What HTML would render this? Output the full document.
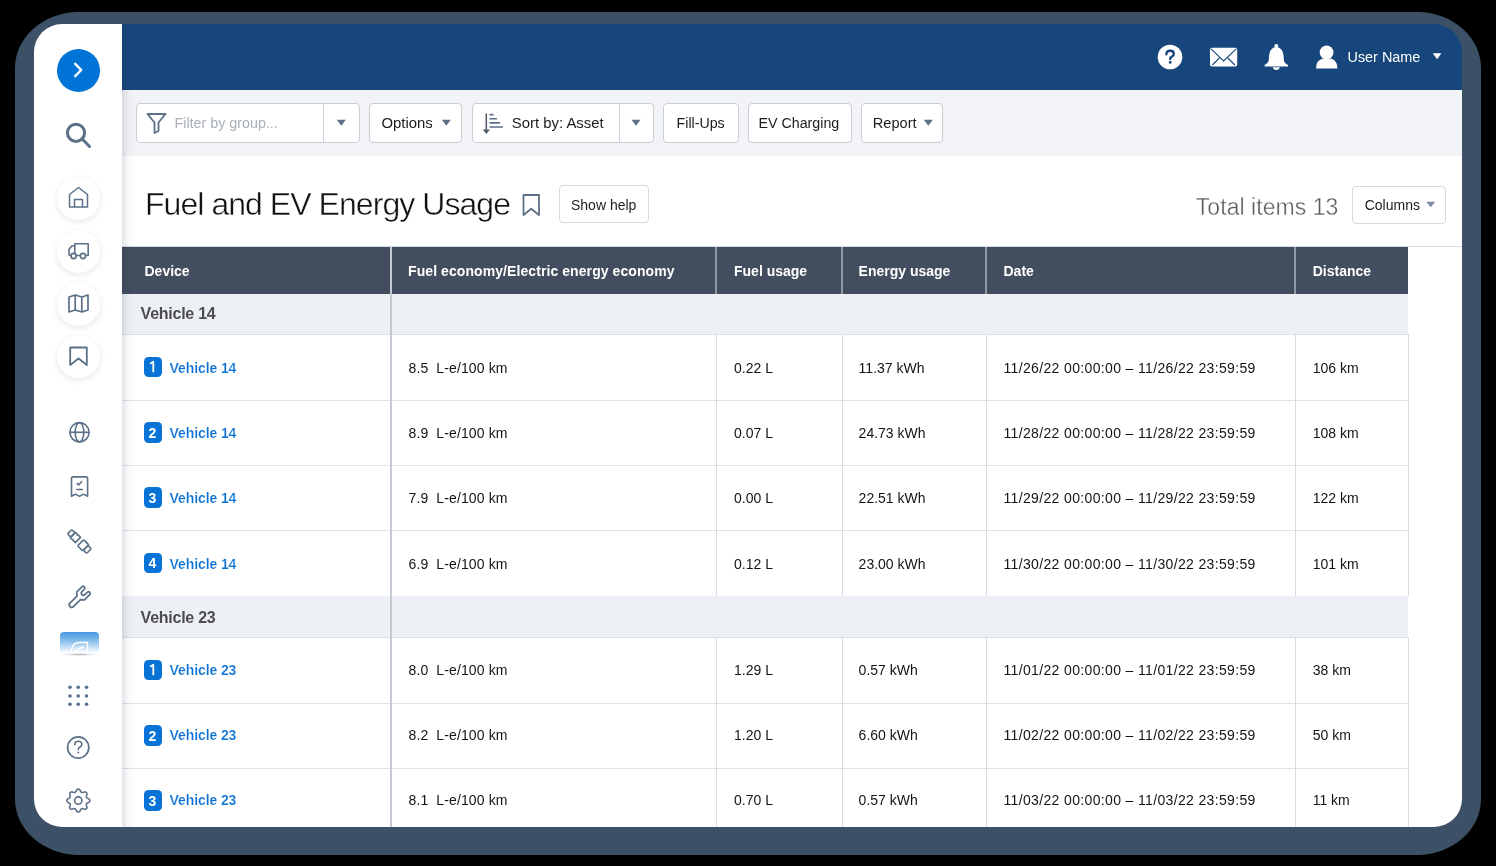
<!DOCTYPE html>
<html><head><meta charset="utf-8">
<style>
*{box-sizing:border-box;margin:0;padding:0}
html,body{width:1496px;height:866px;overflow:hidden;background:#000;font-family:"Liberation Sans",sans-serif}
.abs{position:absolute}
#frame{position:absolute;left:15px;top:12px;width:1466px;height:843px;background:#3d5166;border-radius:64px / 56px}
#screen{position:absolute;left:0;top:0;width:1496px;height:866px;will-change:transform;clip-path:inset(24px 34px 39px 34px round 28px);background:#fff}
#side{position:absolute;left:34px;top:24px;width:88px;height:803px;background:#fff}
#hdr{position:absolute;left:122px;top:24px;width:1340px;height:66px;background:#17467c}
#tb{position:absolute;left:122px;top:90px;width:1340px;height:66px;background:#f2f3f7}
#shadow{position:absolute;left:122px;top:90px;width:12px;height:737px;background:linear-gradient(90deg,rgba(40,50,70,.10),rgba(40,50,70,0))}
.btn{position:absolute;top:103px;height:40px;background:#fff;border:1px solid #c9ced6;border-radius:4px;font-size:14.7px;color:#1c1c1c;line-height:38px;white-space:nowrap}
.tri{position:absolute;width:0;height:0;border-left:4.5px solid transparent;border-right:4.5px solid transparent;border-top:6px solid #5d6f85}
.circ{position:absolute;width:43px;height:43px;border-radius:50%;background:#fff;box-shadow:0 2px 6px rgba(40,50,80,.12)}
svg{position:absolute;overflow:visible}
.t{position:absolute;white-space:pre;font-size:14px;color:#1f1f1f;line-height:16px}
.th{position:absolute;white-space:pre;font-size:14px;font-weight:bold;color:#fff;line-height:16px}
.vl{position:absolute;width:1px;background:#d8dbe1}
.hl{position:absolute;height:1px;background:#dfe2e7}
.badge{position:absolute;width:18px;height:20px;background:#0b74d4;border-radius:3px;color:#fff;font-size:13px;text-align:center;line-height:20px}
.lnk{position:absolute;white-space:pre;font-size:14px;font-weight:bold;color:#1a74cb;line-height:16px}
.grp{position:absolute;white-space:pre;font-size:15.5px;font-weight:bold;color:#505050;line-height:18px}
</style></head>
<body>
<div id="frame"></div>
<div id="screen">
<div id="side"></div><div id="hdr"></div><div id="tb"></div>
<div class="abs" style="left:57px;top:49px;width:43px;height:43px;border-radius:50%;background:#0074d6"></div>
<svg style="left:0;top:0" width="1" height="1"><path d="M75.2 63.8 L81.2 70 L75.2 76.2" fill="none" stroke="#fff" stroke-width="2.4" stroke-linecap="round" stroke-linejoin="round"/></svg>
<svg style="left:0;top:0" width="1" height="1"><circle cx="76" cy="132.8" r="8.6" fill="none" stroke="#5b7087" stroke-width="3"/><path d="M82.5 139.3 L89.5 146.5" stroke="#5b7087" stroke-width="3" stroke-linecap="round"/></svg>
<div class="circ" style="left:57px;top:176.5px"></div>
<div class="circ" style="left:57px;top:229.5px"></div>
<div class="circ" style="left:57px;top:282.5px"></div>
<div class="circ" style="left:57px;top:334.5px"></div>
<svg style="left:0;top:0" width="1" height="1"><path d="M69.5 207 V194.5 L78.5 187.5 L87.5 194.5 V207 Z M74.5 207 V199.5 H82.5 V207" fill="none" stroke="#5b7087" stroke-width="1.5" stroke-linejoin="round"/></svg>
<svg style="left:0;top:0" width="1" height="1"><path d="M71.3 255.5 H70 Q69 255.5 69 254.5 V249.5 L71.7 246 H74.8 M74.8 255.5 V243.8 H88.2 V255.5 H86 M80 255.5 H76.6" fill="none" stroke="#5b7087" stroke-width="1.6" stroke-linejoin="round"/><circle cx="73.6" cy="256" r="2.6" fill="#fff" stroke="#5b7087" stroke-width="1.6"/><circle cx="83" cy="256" r="2.6" fill="#fff" stroke="#5b7087" stroke-width="1.6"/></svg>
<svg style="left:0;top:0" width="1" height="1"><path d="M69 297 L75.2 295 L81.8 297 L88 295 V310 L81.8 312 L75.2 310 L69 312 Z M75.2 295 V310 M81.8 297 V312" fill="none" stroke="#5b7087" stroke-width="1.7" stroke-linejoin="round"/></svg>
<svg style="left:0;top:0" width="1" height="1"><path d="M70.2 347.5 H86.8 V365 L78.5 358.5 L70.2 365 Z" fill="none" stroke="#5b7087" stroke-width="1.8" stroke-linejoin="round"/></svg>
<svg style="left:0;top:0" width="1" height="1"><circle cx="79.5" cy="432.3" r="9.6" fill="none" stroke="#5b7087" stroke-width="1.7"/><ellipse cx="79.5" cy="432.3" rx="4.3" ry="9.6" fill="none" stroke="#5b7087" stroke-width="1.6"/><path d="M70 432.3 H89" stroke="#5b7087" stroke-width="1.6"/></svg>
<svg style="left:0;top:0" width="1" height="1"><path d="M71.5 496.3 V478.6 Q71.5 476.9 73.2 476.9 H85.9 Q87.6 476.9 87.6 478.6 V496.3 L83.5 494.1 L79.5 496.4 L75.5 494.1 Z" fill="none" stroke="#5b7087" stroke-width="1.6" stroke-linejoin="round"/><path d="M77.3 483.6 L78.6 485 L81.6 481.7 M76.9 489.5 H82.4" fill="none" stroke="#5b7087" stroke-width="1.6" stroke-linecap="round" stroke-linejoin="round"/></svg>
<svg style="left:0;top:0" width="1" height="1"><g transform="rotate(-45 79.5 541.6)" fill="none" stroke="#5b7087" stroke-width="1.6" stroke-linejoin="round"><rect x="76.5" y="527.6" width="6" height="4.6" rx="1.3"/><path d="M75.8 532.2 H83.2 V534.5 Q82.2 535.3 83.2 536.2 V539.4 H75.8 V536.2 Q76.8 535.3 75.8 534.5 Z"/><rect x="75.2" y="543.2" width="8.6" height="7.2" rx="1"/><rect x="76.2" y="550.4" width="6.6" height="4.6" rx="1.3"/></g></svg>
<svg style="left:0;top:0" width="1" height="1"><g transform="translate(78.7 597.9) rotate(45) scale(1.07)"><path d="M-2.3 0 V9.3 Q-2.3 11.4 0 11.4 Q2.3 11.4 2.3 9.3 V0 L5.2 -2.6 V-9.4 Q5.2 -11 3.6 -11 Q2 -11 2 -9.4 V-6.2 Q2 -4.3 0 -4.3 Q-2 -4.3 -2 -6.2 V-9.4 Q-2 -11 -3.6 -11 Q-5.2 -11 -5.2 -9.4 V-2.6 Z" fill="none" stroke="#5b7087" stroke-width="1.6" stroke-linejoin="round"/></g></svg>
<div class="abs" style="left:60px;top:632px;width:39px;height:21px;border-radius:4px 4px 0 0;background:linear-gradient(180deg,#4797df 0%,#8cc0ec 45%,#ffffff 100%)"></div>
<div class="abs" style="left:61px;top:653px;width:37px;height:3px;border-radius:50%;background:radial-gradient(ellipse at center,rgba(120,125,140,.55),rgba(120,125,140,0) 70%)"></div>
<svg style="left:0;top:0" width="1" height="1"><path d="M71.5 653 Q71 642.5 80 642.5 L87.5 642.5 V653 M74.5 652 Q77.5 648.5 83 647" fill="none" stroke="#fff" stroke-width="1.4" stroke-linecap="round"/></svg>
<svg style="left:0;top:0" width="1" height="1"><circle cx="70" cy="687.3" r="1.8" fill="#5b7087"/><circle cx="78.2" cy="687.3" r="1.8" fill="#5b7087"/><circle cx="86.5" cy="687.3" r="1.8" fill="#5b7087"/><circle cx="70" cy="696" r="1.8" fill="#5b7087"/><circle cx="78.2" cy="696" r="1.8" fill="#5b7087"/><circle cx="86.5" cy="696" r="1.8" fill="#5b7087"/><circle cx="70" cy="704.3" r="1.8" fill="#5b7087"/><circle cx="78.2" cy="704.3" r="1.8" fill="#5b7087"/><circle cx="86.5" cy="704.3" r="1.8" fill="#5b7087"/></svg>
<svg style="left:0;top:0" width="1" height="1"><circle cx="78.2" cy="747.5" r="10.6" fill="none" stroke="#5b7087" stroke-width="1.7"/><path d="M74.8 744.8 Q74.8 741.2 78.3 741.2 Q81.8 741.2 81.8 744.4 Q81.8 746.3 79.5 747.2 Q78.3 747.8 78.3 749.6" fill="none" stroke="#5b7087" stroke-width="1.6" stroke-linecap="round"/><circle cx="78.3" cy="752.6" r="1" fill="#5b7087"/></svg>
<svg style="left:0;top:0" width="1" height="1"><path d="M89.75 800.60 L89.73 800.90 L89.66 801.20 L89.54 801.48 L89.37 801.76 L89.12 802.02 L88.81 802.26 L88.45 802.48 L88.06 802.67 L87.69 802.85 L87.36 803.03 L87.09 803.21 L86.88 803.39 L86.71 803.58 L86.58 803.78 L86.48 803.99 L86.40 804.21 L86.35 804.44 L86.34 804.70 L86.36 804.98 L86.43 805.29 L86.53 805.65 L86.67 806.04 L86.81 806.45 L86.91 806.86 L86.96 807.25 L86.95 807.60 L86.88 807.92 L86.76 808.21 L86.59 808.47 L86.40 808.70 L86.17 808.89 L85.91 809.06 L85.62 809.18 L85.30 809.25 L84.95 809.26 L84.56 809.21 L84.15 809.11 L83.74 808.97 L83.35 808.83 L82.99 808.73 L82.68 808.66 L82.40 808.64 L82.14 808.65 L81.91 808.70 L81.69 808.78 L81.48 808.88 L81.28 809.01 L81.09 809.18 L80.91 809.39 L80.73 809.66 L80.55 809.99 L80.37 810.36 L80.18 810.75 L79.96 811.11 L79.72 811.42 L79.46 811.67 L79.18 811.84 L78.90 811.96 L78.60 812.03 L78.30 812.05 L78.00 812.03 L77.70 811.96 L77.42 811.84 L77.14 811.67 L76.88 811.42 L76.64 811.11 L76.42 810.75 L76.23 810.36 L76.05 809.99 L75.87 809.66 L75.69 809.39 L75.51 809.18 L75.32 809.01 L75.12 808.88 L74.91 808.78 L74.69 808.70 L74.46 808.65 L74.20 808.64 L73.92 808.66 L73.61 808.73 L73.25 808.83 L72.86 808.97 L72.45 809.11 L72.04 809.21 L71.65 809.26 L71.30 809.25 L70.98 809.18 L70.69 809.06 L70.43 808.89 L70.20 808.70 L70.01 808.47 L69.84 808.21 L69.72 807.92 L69.65 807.60 L69.64 807.25 L69.69 806.86 L69.79 806.45 L69.93 806.04 L70.07 805.65 L70.17 805.29 L70.24 804.98 L70.26 804.70 L70.25 804.44 L70.20 804.21 L70.12 803.99 L70.02 803.78 L69.89 803.58 L69.72 803.39 L69.51 803.21 L69.24 803.03 L68.91 802.85 L68.54 802.67 L68.15 802.48 L67.79 802.26 L67.48 802.02 L67.23 801.76 L67.06 801.48 L66.94 801.20 L66.87 800.90 L66.85 800.60 L66.87 800.30 L66.94 800.00 L67.06 799.72 L67.23 799.44 L67.48 799.18 L67.79 798.94 L68.15 798.72 L68.54 798.53 L68.91 798.35 L69.24 798.17 L69.51 797.99 L69.72 797.81 L69.89 797.62 L70.02 797.42 L70.12 797.21 L70.20 796.99 L70.25 796.76 L70.26 796.50 L70.24 796.22 L70.17 795.91 L70.07 795.55 L69.93 795.16 L69.79 794.75 L69.69 794.34 L69.64 793.95 L69.65 793.60 L69.72 793.28 L69.84 792.99 L70.01 792.73 L70.20 792.50 L70.43 792.31 L70.69 792.14 L70.98 792.02 L71.30 791.95 L71.65 791.94 L72.04 791.99 L72.45 792.09 L72.86 792.23 L73.25 792.37 L73.61 792.47 L73.92 792.54 L74.20 792.56 L74.46 792.55 L74.69 792.50 L74.91 792.42 L75.12 792.32 L75.32 792.19 L75.51 792.02 L75.69 791.81 L75.87 791.54 L76.05 791.21 L76.23 790.84 L76.42 790.45 L76.64 790.09 L76.88 789.78 L77.14 789.53 L77.42 789.36 L77.70 789.24 L78.00 789.17 L78.30 789.15 L78.60 789.17 L78.90 789.24 L79.18 789.36 L79.46 789.53 L79.72 789.78 L79.96 790.09 L80.18 790.45 L80.37 790.84 L80.55 791.21 L80.73 791.54 L80.91 791.81 L81.09 792.02 L81.28 792.19 L81.48 792.32 L81.69 792.42 L81.91 792.50 L82.14 792.55 L82.40 792.56 L82.68 792.54 L82.99 792.47 L83.35 792.37 L83.74 792.23 L84.15 792.09 L84.56 791.99 L84.95 791.94 L85.30 791.95 L85.62 792.02 L85.91 792.14 L86.17 792.31 L86.40 792.50 L86.59 792.73 L86.76 792.99 L86.88 793.28 L86.95 793.60 L86.96 793.95 L86.91 794.34 L86.81 794.75 L86.67 795.16 L86.53 795.55 L86.43 795.91 L86.36 796.22 L86.34 796.50 L86.35 796.76 L86.40 796.99 L86.48 797.21 L86.58 797.42 L86.71 797.62 L86.88 797.81 L87.09 797.99 L87.36 798.17 L87.69 798.35 L88.06 798.53 L88.45 798.72 L88.81 798.94 L89.12 799.18 L89.37 799.44 L89.54 799.72 L89.66 800.00 L89.73 800.30 Z" fill="none" stroke="#5b7087" stroke-width="1.6" stroke-linejoin="round"/><circle cx="78.3" cy="800.6" r="3.7" fill="none" stroke="#5b7087" stroke-width="1.6"/></svg>
<svg style="left:0;top:0" width="1" height="1"><circle cx="1170" cy="57" r="12.3" fill="#fff"/><path d="M1166.4 54.3 Q1166.4 50.8 1170.2 50.8 Q1173.8 50.8 1173.8 54 Q1173.8 55.8 1171.6 56.8 Q1170.2 57.5 1170.2 59" fill="none" stroke="#17467c" stroke-width="2.4" stroke-linecap="round" stroke-linejoin="round"/><circle cx="1170.2" cy="62.4" r="1.4" fill="#17467c"/></svg>
<svg style="left:0;top:0" width="1" height="1"><rect x="1210" y="47.8" width="27.2" height="18.6" rx="2" fill="#fff"/><path d="M1211 48.8 L1223.6 61 L1236.2 48.8 M1212.3 65 L1219.4 58 M1234.9 65 L1227.8 58" fill="none" stroke="#17467c" stroke-width="1.1"/></svg>
<svg style="left:0;top:0" width="1" height="1"><circle cx="1276.3" cy="46" r="2" fill="#fff"/><path d="M1276.3 47 Q1283.2 47.8 1283.6 56 L1283.9 60.5 Q1284.3 63.2 1288 65 V66.5 H1264.6 V65 Q1268.3 63.2 1268.7 60.5 L1269 56 Q1269.4 47.8 1276.3 47 Z" fill="#fff"/><path d="M1272.8 67.3 Q1273.3 70 1276.3 70 Q1279.3 70 1279.8 67.3 Z" fill="#fff"/></svg>
<svg style="left:0;top:0" width="1" height="1"><circle cx="1326.6" cy="52.3" r="6.9" fill="#fff"/><path d="M1316 68.6 Q1316 58.2 1326.6 58 Q1337.4 58.2 1337.4 68.6 Z" fill="#fff"/></svg>
<div class="abs" style="left:1347.5px;top:47.51px;font-size:14.4px;line-height:18px;white-space:pre;color:#fff">User Name</div>
<svg style="left:0;top:0" width="1" height="1"><path d="M1432.8 53.2 H1441.3999999999999 L1437.1 59.2 Z" fill="#fff"/></svg>
<div class="btn" style="left:136px;width:224px"></div>
<div class="abs" style="left:323px;top:104px;width:1px;height:38px;background:#cdd2d9"></div>
<svg style="left:0;top:0" width="1" height="1"><path d="M147.5 114 H165.5 L158.5 122.5 V131 L154.5 133 V122.5 Z" fill="none" stroke="#5b7087" stroke-width="1.8" stroke-linejoin="round"/></svg>
<div class="abs" style="left:174.5px;top:114.05px;font-size:14.3px;line-height:18px;white-space:pre;color:#a9b0ba">Filter by group...</div>
<svg style="left:0;top:0" width="1" height="1"><path d="M336.8 119.8 H345.8 L341.3 125.8 Z" fill="#5d6f85"/></svg>
<div class="btn" style="left:369px;width:93px"></div>
<div class="abs" style="left:381.5px;top:113.64px;font-size:14.9px;line-height:19px;white-space:pre;color:#1c1c1c">Options</div>
<svg style="left:0;top:0" width="1" height="1"><path d="M441.8 119.8 H450.8 L446.3 125.8 Z" fill="#5d6f85"/></svg>
<div class="btn" style="left:472px;width:182px"></div>
<div class="abs" style="left:619px;top:104px;width:1px;height:38px;background:#cdd2d9"></div>
<svg style="left:0;top:0" width="1" height="1"><path d="M486.3 113.5 V130" stroke="#505a66" stroke-width="1.5"/><path d="M482.7 129.5 H489.9 L486.3 134 Z" fill="#505a66"/><path d="M489.5 114.6 H493.5 M489.5 118.8 H497 M489.5 122.9 H500 M489.5 127 H503" stroke="#5b7087" stroke-width="1.6"/></svg>
<div class="abs" style="left:511.8px;top:113.54px;font-size:14.9px;line-height:19px;white-space:pre;color:#1c1c1c">Sort by: Asset</div>
<svg style="left:0;top:0" width="1" height="1"><path d="M631.5 119.8 H640.5 L636.0 125.8 Z" fill="#5d6f85"/></svg>
<div class="btn" style="left:663px;width:76px"></div>
<div class="abs" style="left:676.6px;top:113.88px;font-size:14.2px;line-height:18px;white-space:pre;color:#1c1c1c">Fill-Ups</div>
<div class="btn" style="left:748px;width:104px"></div>
<div class="abs" style="left:758.5px;top:113.86px;font-size:14.25px;line-height:18px;white-space:pre;color:#1c1c1c">EV Charging</div>
<div class="btn" style="left:861px;width:82px"></div>
<div class="abs" style="left:872.8px;top:113.74px;font-size:14.6px;line-height:18px;white-space:pre;color:#1c1c1c">Report</div>
<svg style="left:0;top:0" width="1" height="1"><path d="M923.8 119.8 H932.8 L928.3 125.8 Z" fill="#5d6f85"/></svg>
<div class="abs" style="left:145px;top:183.51px;font-size:32px;line-height:40px;white-space:pre;color:#111;letter-spacing:-0.95px;-webkit-text-stroke:0.45px #fff">Fuel and EV Energy Usage</div>
<svg style="left:0;top:0" width="1" height="1"><path d="M523.5 195 H539 V215 L531.2 208.8 L523.5 215 Z" fill="none" stroke="#5b7087" stroke-width="1.8" stroke-linejoin="round"/></svg>
<div class="btn" style="left:558.5px;top:185.3px;width:90.5px;height:38px;border-color:#d5d9e0"></div>
<div class="abs" style="left:571px;top:195.55px;font-size:14px;line-height:18px;white-space:pre;color:#1c1c1c">Show help</div>
<div class="abs" style="left:1195.8px;top:192.53px;font-size:23px;line-height:29px;white-space:pre;color:#5c5c5c;letter-spacing:0.05px;-webkit-text-stroke:0.35px #fff">Total items 13</div>
<div class="btn" style="left:1352px;top:185.5px;width:94px;height:38px;border-color:#d5d9e0"></div>
<div class="abs" style="left:1364.7px;top:195.55px;font-size:14px;line-height:18px;white-space:pre;color:#1c1c1c">Columns</div>
<svg style="left:0;top:0" width="1" height="1"><path d="M1426.2 201.8 H1435.2 L1430.7 207.3 Z" fill="#7d8ea3"/></svg>
<div class="abs" style="left:122px;top:246px;width:1340px;height:1px;background:#d5d9e0"></div>
<div class="abs" style="left:122px;top:247px;width:1286px;height:47px;background:#424e5f"></div>
<div class="abs" style="left:144.5px;top:262.45px;font-size:14px;line-height:18px;white-space:pre;color:#fff;font-weight:bold">Device</div>
<div class="abs" style="left:408px;top:262.45px;font-size:14px;line-height:18px;white-space:pre;color:#fff;font-weight:bold;letter-spacing:0.08px">Fuel economy/Electric energy economy</div>
<div class="abs" style="left:734px;top:262.45px;font-size:14px;line-height:18px;white-space:pre;color:#fff;font-weight:bold">Fuel usage</div>
<div class="abs" style="left:858.6px;top:262.45px;font-size:14px;line-height:18px;white-space:pre;color:#fff;font-weight:bold">Energy usage</div>
<div class="abs" style="left:1003.5px;top:262.45px;font-size:14px;line-height:18px;white-space:pre;color:#fff;font-weight:bold">Date</div>
<div class="abs" style="left:1312.7px;top:262.45px;font-size:14px;line-height:18px;white-space:pre;color:#fff;font-weight:bold">Distance</div>
<div class="abs" style="left:715px;top:247px;width:2px;height:47px;background:#8f98a4"></div>
<div class="abs" style="left:841px;top:247px;width:2px;height:47px;background:#8f98a4"></div>
<div class="abs" style="left:985px;top:247px;width:2px;height:47px;background:#8f98a4"></div>
<div class="abs" style="left:1294px;top:247px;width:2px;height:47px;background:#8f98a4"></div>
<div class="abs" style="left:122px;top:294px;width:1286px;height:40px;background:#edf0f5"></div>
<div class="abs" style="left:140.6px;top:303.66px;font-size:16px;line-height:20px;white-space:pre;color:#4d4d4d;font-weight:bold;letter-spacing:-0.25px">Vehicle 14</div>
<div class="hl" style="left:122px;top:334px;width:1286px;background:#dde0e6"></div>
<div class="badge" style="left:144px;top:356.8px;height:20.5px;border-radius:4.5px;background:#0873d6"></div>
<svg style="left:0;top:0" width="1" height="1"><path d="M150.2 363.80 L153.3 361.70 V372.30" fill="none" stroke="#fff" stroke-width="1.8" stroke-linejoin="round"/></svg>
<div class="abs" style="left:169.6px;top:358.55px;font-size:14px;line-height:18px;white-space:pre;color:#0a71d4;font-weight:bold;letter-spacing:-0.1px;-webkit-text-stroke:0.2px #fff">Vehicle 14</div>
<div class="abs" style="left:408.5px;top:358.55px;font-size:14px;line-height:18px;white-space:pre;color:#141414;letter-spacing:0.12px">8.5  L-e/100 km</div>
<div class="abs" style="left:734px;top:358.55px;font-size:14px;line-height:18px;white-space:pre;color:#141414">0.22 L</div>
<div class="abs" style="left:858.6px;top:358.55px;font-size:14px;line-height:18px;white-space:pre;color:#141414">11.37 kWh</div>
<div class="abs" style="left:1003.5px;top:358.55px;font-size:14px;line-height:18px;white-space:pre;color:#141414;letter-spacing:0.35px">11/26/22 00:00:00 – 11/26/22 23:59:59</div>
<div class="abs" style="left:1312.7px;top:358.55px;font-size:14px;line-height:18px;white-space:pre;color:#141414">106 km</div>
<div class="hl" style="left:122px;top:400px;width:1286px"></div>
<div class="badge" style="left:144px;top:422.3px;height:20.5px;border-radius:4.5px;background:#0873d6"></div>
<div class="abs" style="left:148.6px;top:423.95px;font-size:14px;line-height:18px;white-space:pre;color:#fff;font-weight:bold">2</div>
<div class="abs" style="left:169.6px;top:424.05px;font-size:14px;line-height:18px;white-space:pre;color:#0a71d4;font-weight:bold;letter-spacing:-0.1px;-webkit-text-stroke:0.2px #fff">Vehicle 14</div>
<div class="abs" style="left:408.5px;top:424.05px;font-size:14px;line-height:18px;white-space:pre;color:#141414;letter-spacing:0.12px">8.9  L-e/100 km</div>
<div class="abs" style="left:734px;top:424.05px;font-size:14px;line-height:18px;white-space:pre;color:#141414">0.07 L</div>
<div class="abs" style="left:858.6px;top:424.05px;font-size:14px;line-height:18px;white-space:pre;color:#141414">24.73 kWh</div>
<div class="abs" style="left:1003.5px;top:424.05px;font-size:14px;line-height:18px;white-space:pre;color:#141414;letter-spacing:0.35px">11/28/22 00:00:00 – 11/28/22 23:59:59</div>
<div class="abs" style="left:1312.7px;top:424.05px;font-size:14px;line-height:18px;white-space:pre;color:#141414">108 km</div>
<div class="hl" style="left:122px;top:465px;width:1286px"></div>
<div class="badge" style="left:144px;top:487.3px;height:20.5px;border-radius:4.5px;background:#0873d6"></div>
<div class="abs" style="left:148.6px;top:488.95px;font-size:14px;line-height:18px;white-space:pre;color:#fff;font-weight:bold">3</div>
<div class="abs" style="left:169.6px;top:489.05px;font-size:14px;line-height:18px;white-space:pre;color:#0a71d4;font-weight:bold;letter-spacing:-0.1px;-webkit-text-stroke:0.2px #fff">Vehicle 14</div>
<div class="abs" style="left:408.5px;top:489.05px;font-size:14px;line-height:18px;white-space:pre;color:#141414;letter-spacing:0.12px">7.9  L-e/100 km</div>
<div class="abs" style="left:734px;top:489.05px;font-size:14px;line-height:18px;white-space:pre;color:#141414">0.00 L</div>
<div class="abs" style="left:858.6px;top:489.05px;font-size:14px;line-height:18px;white-space:pre;color:#141414">22.51 kWh</div>
<div class="abs" style="left:1003.5px;top:489.05px;font-size:14px;line-height:18px;white-space:pre;color:#141414;letter-spacing:0.35px">11/29/22 00:00:00 – 11/29/22 23:59:59</div>
<div class="abs" style="left:1312.7px;top:489.05px;font-size:14px;line-height:18px;white-space:pre;color:#141414">122 km</div>
<div class="hl" style="left:122px;top:530px;width:1286px"></div>
<div class="badge" style="left:144px;top:552.8px;height:20.5px;border-radius:4.5px;background:#0873d6"></div>
<div class="abs" style="left:148.6px;top:554.45px;font-size:14px;line-height:18px;white-space:pre;color:#fff;font-weight:bold">4</div>
<div class="abs" style="left:169.6px;top:554.55px;font-size:14px;line-height:18px;white-space:pre;color:#0a71d4;font-weight:bold;letter-spacing:-0.1px;-webkit-text-stroke:0.2px #fff">Vehicle 14</div>
<div class="abs" style="left:408.5px;top:554.55px;font-size:14px;line-height:18px;white-space:pre;color:#141414;letter-spacing:0.12px">6.9  L-e/100 km</div>
<div class="abs" style="left:734px;top:554.55px;font-size:14px;line-height:18px;white-space:pre;color:#141414">0.12 L</div>
<div class="abs" style="left:858.6px;top:554.55px;font-size:14px;line-height:18px;white-space:pre;color:#141414">23.00 kWh</div>
<div class="abs" style="left:1003.5px;top:554.55px;font-size:14px;line-height:18px;white-space:pre;color:#141414;letter-spacing:0.35px">11/30/22 00:00:00 – 11/30/22 23:59:59</div>
<div class="abs" style="left:1312.7px;top:554.55px;font-size:14px;line-height:18px;white-space:pre;color:#141414">101 km</div>
<div class="hl" style="left:122px;top:596px;width:1286px"></div>
<div class="vl" style="left:716px;top:334px;height:262px"></div>
<div class="vl" style="left:842px;top:334px;height:262px"></div>
<div class="vl" style="left:986px;top:334px;height:262px"></div>
<div class="vl" style="left:1295px;top:334px;height:262px"></div>
<div class="vl" style="left:1408px;top:334px;height:262px"></div>
<div class="abs" style="left:122px;top:596px;width:1286px;height:41px;background:#edf0f5"></div>
<div class="abs" style="left:140.6px;top:608.26px;font-size:16px;line-height:20px;white-space:pre;color:#4d4d4d;font-weight:bold;letter-spacing:-0.25px">Vehicle 23</div>
<div class="hl" style="left:122px;top:637px;width:1286px;background:#dde0e6"></div>
<div class="badge" style="left:144px;top:659.8px;height:20.5px;border-radius:4.5px;background:#0873d6"></div>
<svg style="left:0;top:0" width="1" height="1"><path d="M150.2 666.80 L153.3 664.70 V675.30" fill="none" stroke="#fff" stroke-width="1.8" stroke-linejoin="round"/></svg>
<div class="abs" style="left:169.6px;top:660.95px;font-size:14px;line-height:18px;white-space:pre;color:#0a71d4;font-weight:bold;letter-spacing:-0.1px;-webkit-text-stroke:0.2px #fff">Vehicle 23</div>
<div class="abs" style="left:408.5px;top:660.95px;font-size:14px;line-height:18px;white-space:pre;color:#141414;letter-spacing:0.12px">8.0  L-e/100 km</div>
<div class="abs" style="left:734px;top:660.95px;font-size:14px;line-height:18px;white-space:pre;color:#141414">1.29 L</div>
<div class="abs" style="left:858.6px;top:660.95px;font-size:14px;line-height:18px;white-space:pre;color:#141414">0.57 kWh</div>
<div class="abs" style="left:1003.5px;top:660.95px;font-size:14px;line-height:18px;white-space:pre;color:#141414;letter-spacing:0.35px">11/01/22 00:00:00 – 11/01/22 23:59:59</div>
<div class="abs" style="left:1312.7px;top:660.95px;font-size:14px;line-height:18px;white-space:pre;color:#141414">38 km</div>
<div class="hl" style="left:122px;top:703px;width:1286px"></div>
<div class="badge" style="left:144px;top:725.3px;height:20.5px;border-radius:4.5px;background:#0873d6"></div>
<div class="abs" style="left:148.6px;top:726.95px;font-size:14px;line-height:18px;white-space:pre;color:#fff;font-weight:bold">2</div>
<div class="abs" style="left:169.6px;top:726.45px;font-size:14px;line-height:18px;white-space:pre;color:#0a71d4;font-weight:bold;letter-spacing:-0.1px;-webkit-text-stroke:0.2px #fff">Vehicle 23</div>
<div class="abs" style="left:408.5px;top:726.45px;font-size:14px;line-height:18px;white-space:pre;color:#141414;letter-spacing:0.12px">8.2  L-e/100 km</div>
<div class="abs" style="left:734px;top:726.45px;font-size:14px;line-height:18px;white-space:pre;color:#141414">1.20 L</div>
<div class="abs" style="left:858.6px;top:726.45px;font-size:14px;line-height:18px;white-space:pre;color:#141414">6.60 kWh</div>
<div class="abs" style="left:1003.5px;top:726.45px;font-size:14px;line-height:18px;white-space:pre;color:#141414;letter-spacing:0.35px">11/02/22 00:00:00 – 11/02/22 23:59:59</div>
<div class="abs" style="left:1312.7px;top:726.45px;font-size:14px;line-height:18px;white-space:pre;color:#141414">50 km</div>
<div class="hl" style="left:122px;top:768px;width:1286px"></div>
<div class="badge" style="left:144px;top:790.3px;height:20.5px;border-radius:4.5px;background:#0873d6"></div>
<div class="abs" style="left:148.6px;top:791.95px;font-size:14px;line-height:18px;white-space:pre;color:#fff;font-weight:bold">3</div>
<div class="abs" style="left:169.6px;top:791.45px;font-size:14px;line-height:18px;white-space:pre;color:#0a71d4;font-weight:bold;letter-spacing:-0.1px;-webkit-text-stroke:0.2px #fff">Vehicle 23</div>
<div class="abs" style="left:408.5px;top:791.45px;font-size:14px;line-height:18px;white-space:pre;color:#141414;letter-spacing:0.12px">8.1  L-e/100 km</div>
<div class="abs" style="left:734px;top:791.45px;font-size:14px;line-height:18px;white-space:pre;color:#141414">0.70 L</div>
<div class="abs" style="left:858.6px;top:791.45px;font-size:14px;line-height:18px;white-space:pre;color:#141414">0.57 kWh</div>
<div class="abs" style="left:1003.5px;top:791.45px;font-size:14px;line-height:18px;white-space:pre;color:#141414;letter-spacing:0.35px">11/03/22 00:00:00 – 11/03/22 23:59:59</div>
<div class="abs" style="left:1312.7px;top:791.45px;font-size:14px;line-height:18px;white-space:pre;color:#141414">11 km</div>
<div class="vl" style="left:716px;top:637px;height:190px"></div>
<div class="vl" style="left:842px;top:637px;height:190px"></div>
<div class="vl" style="left:986px;top:637px;height:190px"></div>
<div class="vl" style="left:1295px;top:637px;height:190px"></div>
<div class="vl" style="left:1408px;top:637px;height:190px"></div>
<div class="abs" style="left:390px;top:247px;width:2px;height:580px;background:#c5c9d2"></div>
<div class="abs" style="left:122px;top:24px;width:12px;height:803px;background:linear-gradient(90deg,rgba(20,30,60,.12),rgba(20,30,60,.03) 50%,rgba(20,30,60,0))"></div>
</div>
</body></html>
